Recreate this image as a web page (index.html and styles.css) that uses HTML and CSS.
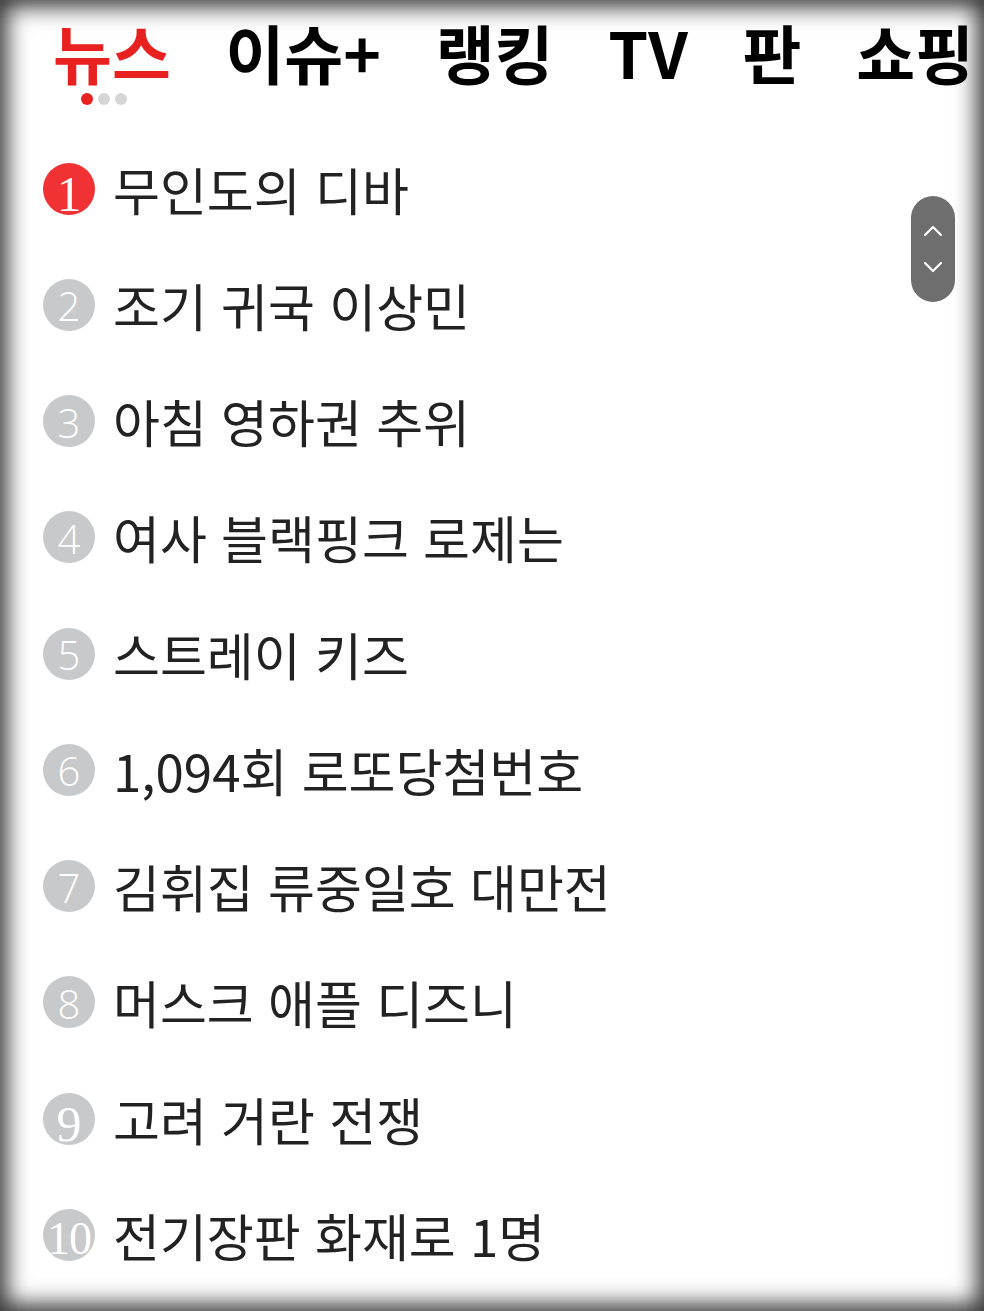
FILE: index.html
```html
<!DOCTYPE html>
<html lang="ko">
<head>
<meta charset="utf-8">
<title>뉴스 랭킹</title>
<link rel="stylesheet" href="styles.css">
</head>
<body>
<div class="screen">
  <nav class="tabs">
    <div class="tab tab-active">
      <span class="tab-label">뉴스</span>
      <div class="dots">
        <span class="dot dot-on"></span>
        <span class="dot"></span>
        <span class="dot"></span>
      </div>
    </div>
    <div class="tab"><span class="tab-label">이슈+</span></div>
    <div class="tab"><span class="tab-label">랭킹</span></div>
    <div class="tab"><span class="tab-label">TV</span></div>
    <div class="tab"><span class="tab-label">판</span></div>
    <div class="tab"><span class="tab-label">쇼핑</span></div>
  </nav>

  <ol class="rank-list">
    <li class="rank-item"><span class="badge badge-top"><span class="num num-serif">1</span></span><span class="title">무인도의 디바</span></li>
    <li class="rank-item"><span class="badge"><span class="num">2</span></span><span class="title">조기 귀국 이상민</span></li>
    <li class="rank-item"><span class="badge"><span class="num">3</span></span><span class="title">아침 영하권 추위</span></li>
    <li class="rank-item"><span class="badge"><span class="num">4</span></span><span class="title">여사 블랙핑크 로제는</span></li>
    <li class="rank-item"><span class="badge"><span class="num">5</span></span><span class="title">스트레이 키즈</span></li>
    <li class="rank-item"><span class="badge"><span class="num">6</span></span><span class="title">1,094회 로또당첨번호</span></li>
    <li class="rank-item"><span class="badge"><span class="num">7</span></span><span class="title">김휘집 류중일호 대만전</span></li>
    <li class="rank-item"><span class="badge"><span class="num">8</span></span><span class="title">머스크 애플 디즈니</span></li>
    <li class="rank-item"><span class="badge"><span class="num num-serif">9</span></span><span class="title">고려 거란 전쟁</span></li>
    <li class="rank-item"><span class="badge"><span class="num num-serif num-wide">10</span></span><span class="title">전기장판 화재로 1명</span></li>
  </ol>

  <div class="pager">
    <svg class="chev" viewBox="0 0 20 12" width="20" height="12"><path d="M2 10 L10 2 L18 10" fill="none" stroke="#fff" stroke-width="2.2" stroke-linecap="round" stroke-linejoin="round"/></svg>
    <svg class="chev" viewBox="0 0 20 12" width="20" height="12"><path d="M2 2 L10 10 L18 2" fill="none" stroke="#fff" stroke-width="2.2" stroke-linecap="round" stroke-linejoin="round"/></svg>
  </div>
</div>
</body>
</html>
```

FILE: styles.css
```css
html, body {
  margin: 0;
  padding: 0;
  background: #fff;
}

.screen {
  position: relative;
  width: 984px;
  height: 1311px;
  overflow: hidden;
  background: #fff;
  box-shadow: inset 0 0 22px 7px #353535;
  font-family: "Noto Sans CJK KR", "Noto Sans", sans-serif;
}

.tabs {
  display: flex;
  justify-content: space-between;
  align-items: flex-start;
  padding: 19px 10px 0 53px;
}

.tab {
  display: flex;
  flex-direction: column;
  align-items: center;
}

.tab-label {
  font-size: 64px;
  line-height: 64px;
  font-weight: 700;
  color: #000;
  white-space: nowrap;
}

.tab-active .tab-label {
  color: #e8201f;
}

.dots {
  display: flex;
  gap: 5px;
  margin-top: 10px;
  margin-right: 15px;
}

.dot {
  width: 12px;
  height: 12px;
  border-radius: 50%;
  background: #d6d6d6;
}

.dot-on {
  background: #e8201f;
}

.rank-list {
  list-style: none;
  margin: 25.5px 0 0;
  padding: 0 0 0 43px;
}

.rank-item {
  display: flex;
  align-items: center;
  height: 116.25px;
}

.badge {
  flex: none;
  width: 52px;
  height: 52px;
  border-radius: 50%;
  background: #c8c9cb;
  display: flex;
  align-items: center;
  justify-content: center;
  margin-right: 18px;
}

.badge-top {
  background: #f03234;
}

.num {
  font-family: "Open Sans", "Noto Sans", sans-serif;
  font-weight: 300;
  font-size: 40px;
  line-height: 40px;
  color: #fff;
  padding-top: 3px;
}

.num-serif {
  font-family: "Liberation Serif", serif;
  font-weight: 400;
  font-size: 50px;
  line-height: 50px;
  padding-top: 10px;
}

.num-wide {
  font-size: 46px;
  letter-spacing: -1px;
  padding-top: 8px;
}

.title {
  font-size: 51px;
  line-height: 60px;
  color: #222;
  white-space: nowrap;
}

.pager {
  position: absolute;
  left: 911px;
  top: 196px;
  width: 44px;
  height: 106px;
  border-radius: 22px;
  background: #6e6e6e;
  display: flex;
  flex-direction: column;
  align-items: center;
  justify-content: center;
  gap: 24px;
}

.chev {
  display: block;
}
```
